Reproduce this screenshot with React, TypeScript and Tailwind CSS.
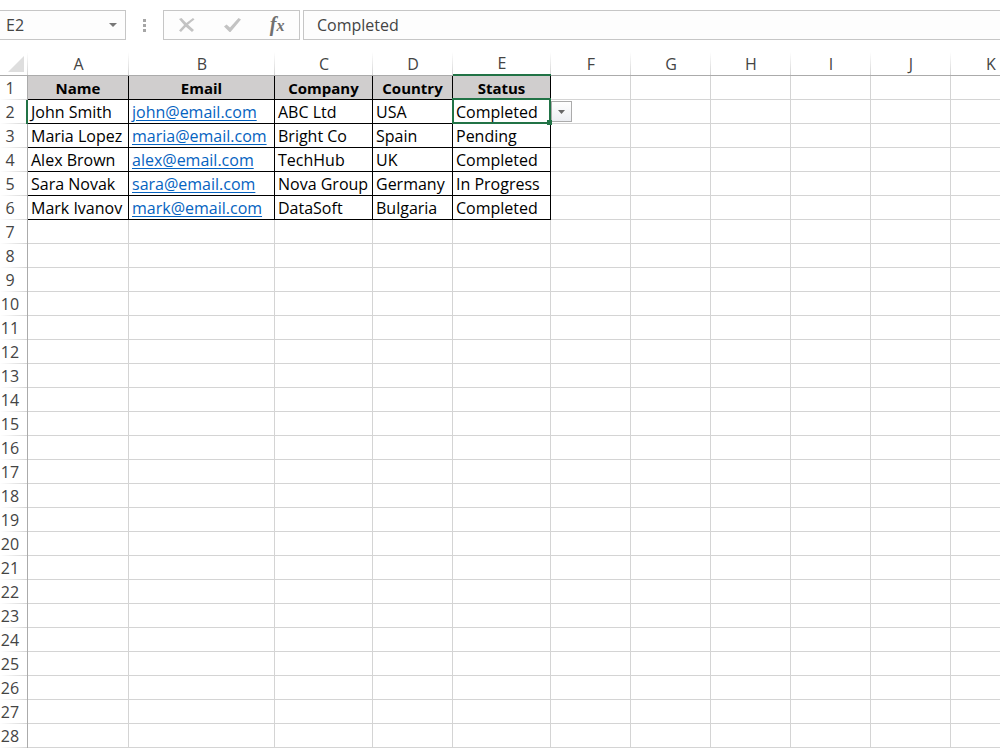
import clsx from 'clsx';

const columns = [
  { name: 'A', width: 'w-[101px]' },
  { name: 'B', width: 'w-[146px]' },
  { name: 'C', width: 'w-[98px]' },
  { name: 'D', width: 'w-20' },
  { name: 'E', width: 'w-[98px]' },
  { name: 'F', width: 'w-20' },
  { name: 'G', width: 'w-20' },
  { name: 'H', width: 'w-20' },
  { name: 'I', width: 'w-20' },
  { name: 'J', width: 'w-20' },
  { name: 'K', width: 'w-20' },
];

const data = [
  ['Name', 'Email', 'Company', 'Country', 'Status'],
  ['John Smith', 'john@email.com', 'ABC Ltd', 'USA', 'Completed'],
  ['Maria Lopez', 'maria@email.com', 'Bright Co', 'Spain', 'Pending'],
  ['Alex Brown', 'alex@email.com', 'TechHub', 'UK', 'Completed'],
  ['Sara Novak', 'sara@email.com', 'Nova Group', 'Germany', 'In Progress'],
  ['Mark Ivanov', 'mark@email.com', 'DataSoft', 'Bulgaria', 'Completed'],
];

const ROW_COUNT = 28;
const ACTIVE = { row: 1, col: 4 };

function FormulaBar() {
  return (
    <div className="flex h-[30px] shrink-0 items-stretch text-[#444]">
      <div className="flex w-[126px] border border-l-0 border-[#c6c6c6] bg-[#fdfdfd]">
        <input
          aria-label="Name box"
          defaultValue="E2"
          className="min-w-0 flex-1 bg-transparent pl-1.5 text-base outline-none"
        />
        <button type="button" aria-label="Open name list" className="flex w-6 items-center justify-center">
          <svg width="8" height="4" viewBox="0 0 8 4" fill="#777" aria-hidden="true">
            <path d="M0 0h8L4 4z" />
          </svg>
        </button>
      </div>
      <div className="flex w-[37px] items-center justify-center">
        <svg width="3" height="13" viewBox="0 0 3 13" fill="#a6a6a6" aria-hidden="true">
          <path d="M0 0h3v3H0zM0 5h3v3H0zM0 10h3v3H0z" />
        </svg>
      </div>
      <div className="mr-[3px] flex w-[137px] items-center justify-around border border-[#c6c6c6] bg-[#fdfdfd]">
        <button type="button" aria-label="Cancel">
          <svg width="16" height="14" viewBox="0 0 16 14" fill="#c3c3c3" aria-hidden="true">
            <path d="M0 1L2.5 0Q7 5 15 12L13 14Q5 8 0 1Z" />
            <path d="M14 0L15.5 1.5Q9 6 2 14L0 12.5Q6 5 14 0Z" />
          </svg>
        </button>
        <button type="button" aria-label="Enter">
          <svg width="17" height="14" viewBox="0 0 17 14" fill="#c3c3c3" aria-hidden="true">
            <path d="M0 8.5L2.5 6.5L6 9.5L14.5 0L17 1.5L6.5 14L5.5 14Z" />
          </svg>
        </button>
        <button
          type="button"
          aria-label="Insert function"
          className="pt-0.5 font-['Liberation_Serif',serif] text-xl leading-5 font-bold text-[#707070] italic"
        >
          f<span className="text-base">x</span>
        </button>
      </div>
      <input
        aria-label="Formula bar"
        defaultValue="Completed"
        className="min-w-0 flex-1 border border-r-0 border-[#c6c6c6] bg-[#fdfdfd] pl-[13px] text-base outline-none"
      />
    </div>
  );
}

function ActiveCellFrame() {
  return (
    <>
      <div className="pointer-events-none absolute -top-0.5 -right-px -bottom-px -left-px z-10 border-2 border-[#217346]" />
      <div className="absolute -right-0.5 -bottom-0.5 z-20 size-[5px] bg-[#217346]" />
      <button
        type="button"
        aria-label="Pick a status"
        className="absolute top-px left-full z-10 ml-px flex h-[21px] w-[21px] items-center justify-center border border-[#ababab] bg-linear-to-b from-white to-[#eceef2]"
      >
        <svg width="7" height="4" viewBox="0 0 7 4" fill="#666" aria-hidden="true">
          <path d="M0 0h7L3.5 4z" />
        </svg>
      </button>
    </>
  );
}

function Cell({ row, col }: { row: number; col: number }) {
  const value = data[row]?.[col];
  const active = row === ACTIVE.row && col === ACTIVE.col;
  return (
    <td
      className={clsx(
        'relative border-r border-b p-0 pt-0.5 whitespace-nowrap text-black',
        value ? 'border-black' : 'border-[#d4d4d4]',
        value && row === 0 && 'bg-[#d0cece] text-center text-[15px] leading-[21px] font-bold',
        value && row > 0 && 'pl-[3px]'
      )}
    >
      {value?.includes('@') ? (
        <a href={`mailto:${value}`} className="text-[#0563c1] underline underline-offset-2">
          {value}
        </a>
      ) : (
        value
      )}
      {active && <ActiveCellFrame />}
    </td>
  );
}

function Sheet() {
  return (
    <table className="w-0 table-fixed border-separate border-spacing-0 text-base leading-[21px]">
      <colgroup>
        <col className="w-7" />
        {columns.map((c) => (
          <col key={c.name} className={c.width} />
        ))}
      </colgroup>
      <thead>
        <tr className="h-6 text-[#444]">
          <td className="border-b border-[#ababab] bg-[linear-gradient(to_bottom,#fff,#d4d4d4)] bg-[length:1px_100%] bg-right bg-no-repeat p-0">
            <svg className="ml-2" width="16" height="16" viewBox="0 0 16 16" fill="#dedede" aria-hidden="true">
              <path d="M16 0v16H0z" />
            </svg>
          </td>
          {columns.map((c, i) => (
            <th
              key={c.name}
              scope="col"
              className={clsx(
                'bg-[linear-gradient(to_bottom,#fff,#d4d4d4)] bg-[length:1px_100%] bg-right bg-no-repeat p-0 font-normal',
                i === ACTIVE.col ? 'border-b-2 border-[#217346] pt-px' : 'border-b border-[#ababab] pt-0.5'
              )}
            >
              {c.name}
            </th>
          ))}
        </tr>
      </thead>
      <tbody>
        {Array.from({ length: ROW_COUNT }, (_, row) => (
          <tr key={row} className="h-6">
            <th
              scope="row"
              className={clsx(
                'bg-[linear-gradient(to_right,#fff,#d4d4d4)] bg-[length:100%_1px] bg-bottom bg-no-repeat p-0 pt-0.5 pb-px text-center font-normal text-[#444]',
                row === ACTIVE.row ? 'border-r-2 border-[#217346] pr-1.5' : 'border-r border-[#ababab] pr-[7px]'
              )}
            >
              {row + 1}
            </th>
            {columns.map((c, col) => (
              <Cell key={c.name} row={row} col={col} />
            ))}
          </tr>
        ))}
      </tbody>
    </table>
  );
}

export default function App() {
  return (
    <main className="flex h-screen flex-col gap-3 overflow-hidden bg-white pt-2.5 font-['Open_Sans','Noto_Sans',sans-serif]">
      <FormulaBar />
      <div className="min-h-0 flex-1 overflow-hidden">
        <Sheet />
      </div>
    </main>
  );
}
